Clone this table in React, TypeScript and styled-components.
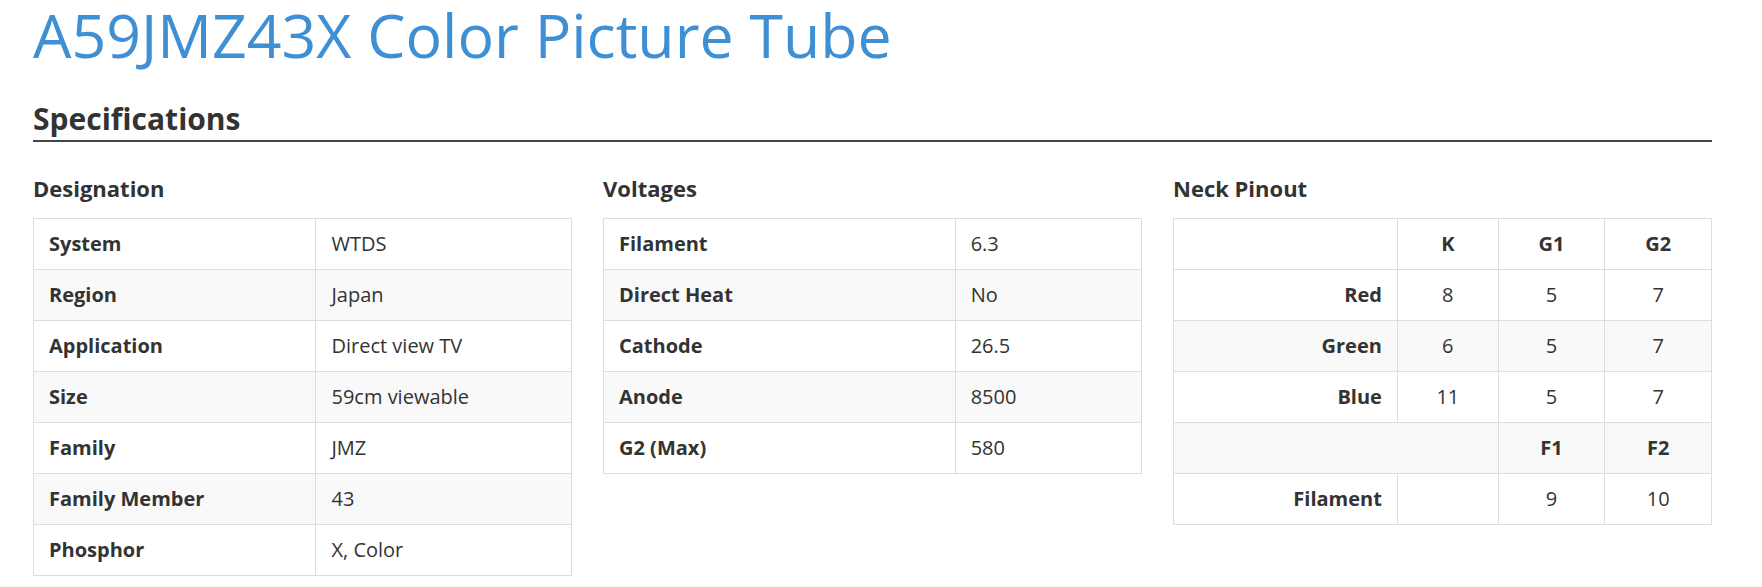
import React from "react";
import styled, { createGlobalStyle } from "styled-components";

const GlobalStyle = createGlobalStyle`
  html, body {
    margin: 0;
    padding: 0;
    background: #fff;
  }
  body {
    font-family: "Open Sans", "Noto Sans", sans-serif;
    color: #333;
    font-size: 20px;
  }
`

const Page = styled.main`
  padding: 0 50px 0 33px;
`

const Title = styled.h1`
  margin: 0;
  padding-top: 2px;
  font-size: 60.8px;
  font-weight: 400;
  line-height: 1.1;
  color: #3f8fd4;
`

const SectionTitle = styled.h2`
  margin: 30px 0 0;
  padding-bottom: 2px;
  font-size: 30px;
  font-weight: 700;
  line-height: 1.3;
  color: #333;
  border-bottom: 2px solid #444;
`

const Columns = styled.div`
  display: grid;
  grid-template-columns: repeat(3, 1fr);
  column-gap: 31px;
  margin-top: 31px;
`

const Block = styled.section``

const BlockTitle = styled.h3`
  margin: 0 0 14px;
  font-size: 22px;
  font-weight: 700;
  line-height: 1.4;
  color: #333;
`

const Table = styled.table`
  width: 100%;
  border-collapse: collapse;
  border: 1px solid #ddd;

  tbody tr:nth-child(even) {
    background: #f9f9f9;
  }
`

interface CellProps {
  align?: "left" | "center" | "right"
}

const Head = styled.th<CellProps>`
  padding: 12px 15px;
  border: 1px solid #ddd;
  font-weight: 700;
  line-height: 26px;
  text-align: ${({ align }) => align || "left"};
`

const Cell = styled.td<CellProps>`
  padding: 12px 15px;
  border: 1px solid #ddd;
  line-height: 26px;
  text-align: ${({ align }) => align || "left"};
`

const designation = [
  ["System", "WTDS"],
  ["Region", "Japan"],
  ["Application", "Direct view TV"],
  ["Size", "59cm viewable"],
  ["Family", "JMZ"],
  ["Family Member", "43"],
  ["Phosphor", "X, Color"],
]

const voltages = [
  ["Filament", "6.3"],
  ["Direct Heat", "No"],
  ["Cathode", "26.5"],
  ["Anode", "8500"],
  ["G2 (Max)", "580"],
]

const guns = [
  ["Red", "8", "5", "7"],
  ["Green", "6", "5", "7"],
  ["Blue", "11", "5", "7"],
]

function KeyValueTable({ rows }: { rows: string[][] }) {
  return (
    <Table>
      <tbody>
        {rows.map(([label, value]) => (
          <tr key={label}>
            <Head scope="row">{label}</Head>
            <Cell>{value}</Cell>
          </tr>
        ))}
      </tbody>
    </Table>
  )
}

function PinoutTable() {
  return (
    <Table>
      <thead>
        <tr>
          <Head />
          <Head align="center">K</Head>
          <Head align="center">G1</Head>
          <Head align="center">G2</Head>
        </tr>
      </thead>
      <tbody>
        {guns.map(([gun, k, g1, g2]) => (
          <tr key={gun}>
            <Head scope="row" align="right">{gun}</Head>
            <Cell align="center">{k}</Cell>
            <Cell align="center">{g1}</Cell>
            <Cell align="center">{g2}</Cell>
          </tr>
        ))}
        <tr>
          <Head colSpan={2} />
          <Head align="center">F1</Head>
          <Head align="center">F2</Head>
        </tr>
        <tr>
          <Head scope="row" align="right">Filament</Head>
          <Cell />
          <Cell align="center">9</Cell>
          <Cell align="center">10</Cell>
        </tr>
      </tbody>
    </Table>
  )
}

export default function App() {
  return (
    <Page>
      <GlobalStyle />
      <Title>A59JMZ43X Color Picture Tube</Title>
      <SectionTitle>Specifications</SectionTitle>
      <Columns>
        <Block>
          <BlockTitle>Designation</BlockTitle>
          <KeyValueTable rows={designation} />
        </Block>
        <Block>
          <BlockTitle>Voltages</BlockTitle>
          <KeyValueTable rows={voltages} />
        </Block>
        <Block>
          <BlockTitle>Neck Pinout</BlockTitle>
          <PinoutTable />
        </Block>
      </Columns>
    </Page>
  )
}
